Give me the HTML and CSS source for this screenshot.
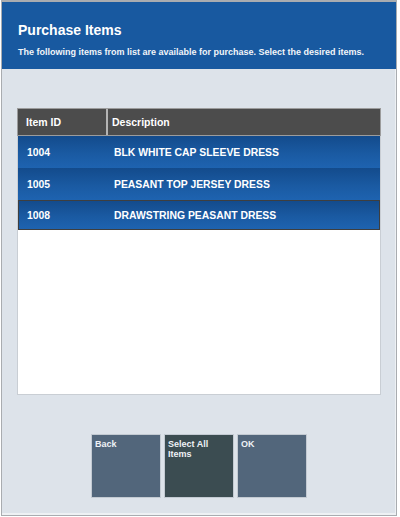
FILE: index.html
```html
<!DOCTYPE html>
<html>
<head>
<meta charset="utf-8">
<link rel="stylesheet" href="styles.css">
</head>
<body>
<div class="frame">
  <div class="header">
    <div class="title">Purchase Items</div>
    <div class="subtitle">The following items from list are available for purchase. Select the desired items.</div>
  </div>
  <div class="content">
    <div class="list">
      <div class="thead">
        <div class="th col-id">Item ID</div>
        <div class="th col-desc">Description</div>
      </div>
      <div class="row">
        <div class="col-id">1004</div>
        <div class="col-desc">BLK WHITE CAP SLEEVE DRESS</div>
      </div>
      <div class="row">
        <div class="col-id">1005</div>
        <div class="col-desc">PEASANT TOP JERSEY DRESS</div>
      </div>
      <div class="row focused">
        <div class="col-id">1008</div>
        <div class="col-desc">DRAWSTRING PEASANT DRESS</div>
      </div>
    </div>
    <div class="buttons">
      <div class="btn">Back</div>
      <div class="btn dark">Select All Items</div>
      <div class="btn">OK</div>
    </div>
  </div>
</div>
</body>
</html>
```

FILE: styles.css
```css
html, body {
  margin: 0;
  padding: 0;
  background: #ffffff;
}
body {
  font-family: "Liberation Sans", Arial, sans-serif;
  font-weight: bold;
}
.frame {
  margin-left: 1px;
  width: 394px;
  height: 513px;
  border: 1px solid #a9acb0;
  border-top: 2px solid #a9acb0;
  background: #dde3ea;
  display: flex;
  flex-direction: column;
}
.header {
  height: 67px;
  background: #1859a0;
  color: #ffffff;
  padding: 20px 16px 0 16px;
  box-sizing: border-box;
}
.title {
  font-size: 14px;
  line-height: 16px;
}
.subtitle {
  margin-top: 9px;
  font-size: 9px;
  line-height: 10px;
  color: #f2f5f9;
  white-space: nowrap;
}
.content {
  flex: 1;
  padding: 39px 14px 0 15px;
  border-right: 1px solid #eef1f4;
  border-bottom: 2px solid #eef1f4;
  display: flex;
  flex-direction: column;
}
.list {
  height: 287px;
  box-sizing: border-box;
  background: #ffffff;
  border: 1px solid #c9ced4;
  border-top: none;
}
.thead {
  display: flex;
  height: 28px;
  margin: 0 -1px;
  background: #4c4c4c;
  border: 1px solid #9c9c9c;
  box-sizing: border-box;
  color: #ffffff;
  font-size: 10.5px;
}
.th {
  display: flex;
  align-items: center;
}
.thead .col-id {
  width: 90px;
  padding-left: 8px;
  box-sizing: border-box;
  border-right: 2px solid #b4b4b4;
}
.thead .col-desc {
  padding-left: 4px;
}
.row {
  display: flex;
  align-items: center;
  height: 32px;
  background: linear-gradient(to bottom, #134b8c 0%, #1a5aa2 55%, #1e63b0 100%);
  color: #ffffff;
  font-size: 10.4px;
  box-sizing: border-box;
}
.row .col-id {
  width: 96px;
  padding-left: 9px;
  box-sizing: border-box;
}
.row.focused {
  height: 30px;
  border: 1px solid #3e3e3e;
}
.row.focused .col-id {
  width: 95px;
  padding-left: 8px;
}
.buttons {
  margin-top: 39px;
  display: flex;
  justify-content: center;
  gap: 3px;
}
.btn {
  width: 70px;
  height: 64px;
  box-sizing: border-box;
  border: 1px solid #c3cad2;
  background: #52667b;
  color: #eef2f6;
  font-size: 9px;
  line-height: 10px;
  padding: 4px 3px 0 3px;
}
.btn.dark {
  background: #3b4c51;
}
```
